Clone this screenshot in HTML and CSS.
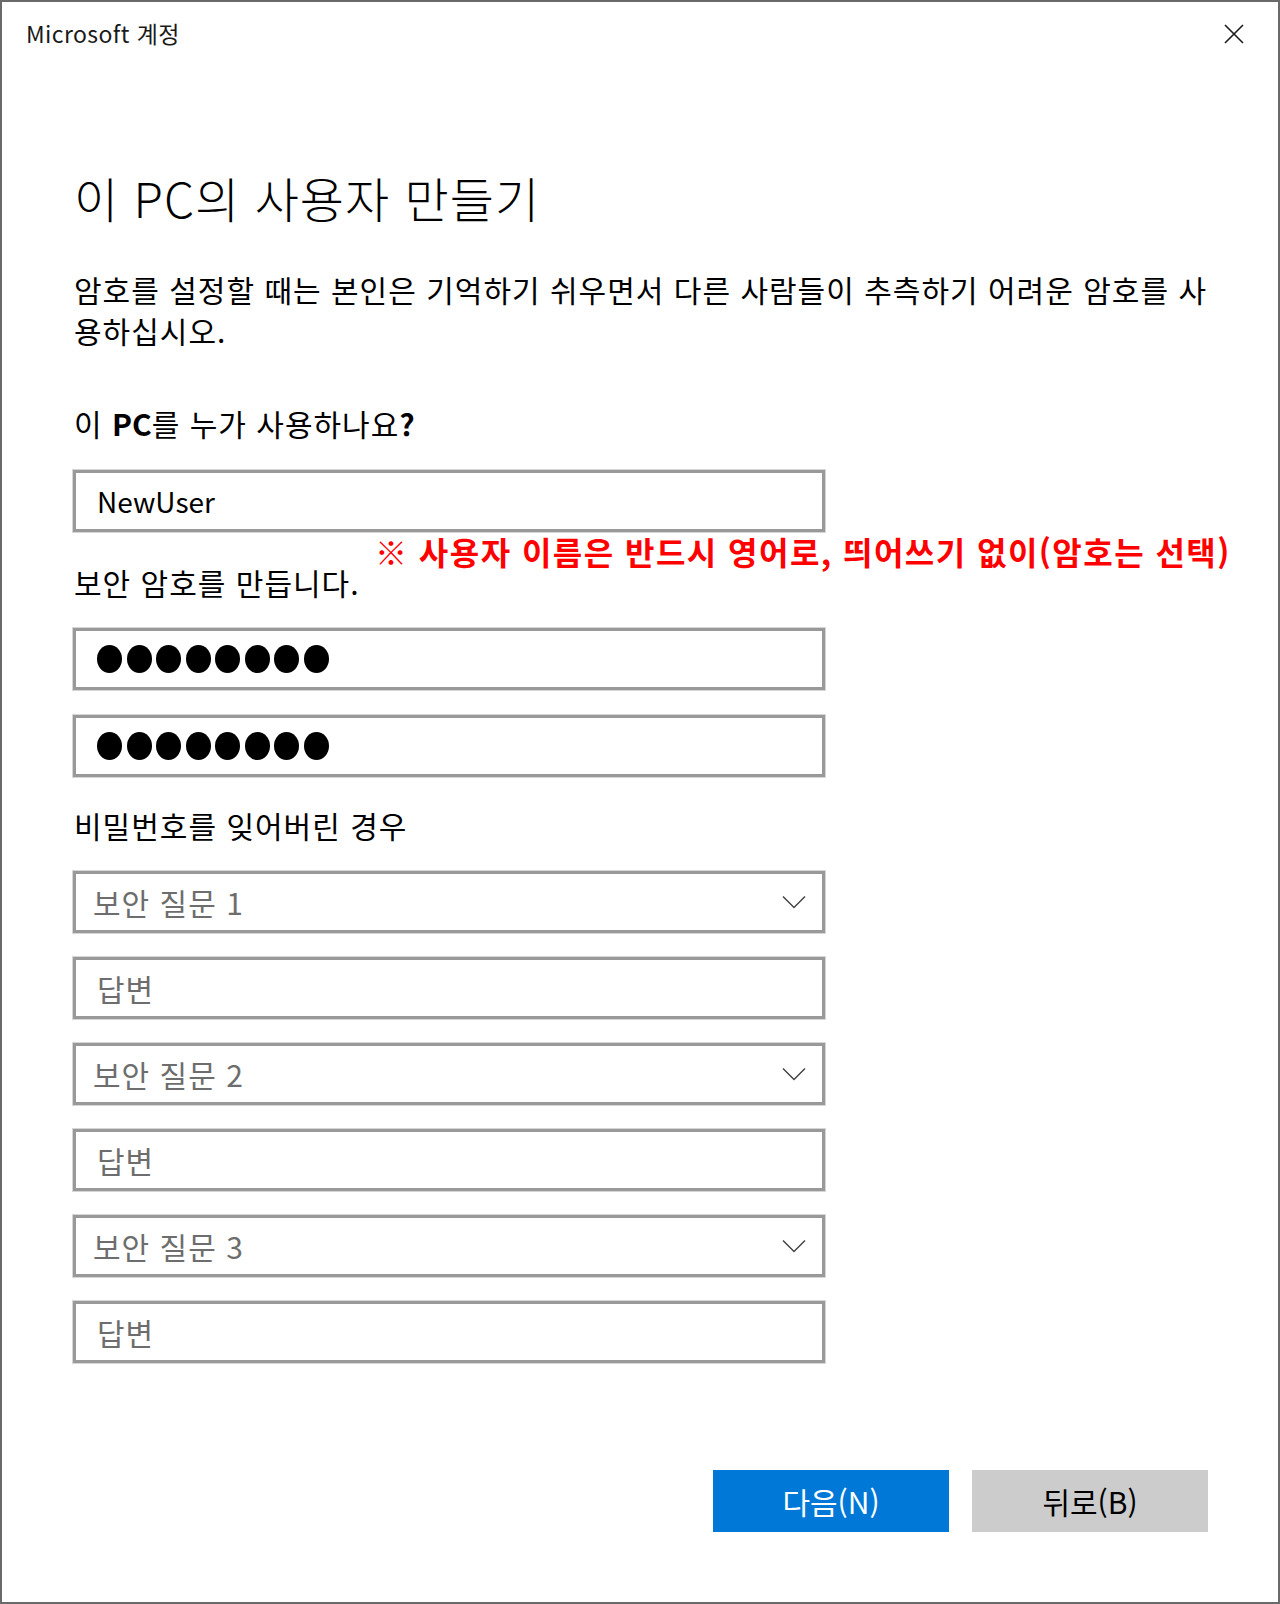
FILE: index.html
```html
<!DOCTYPE html>
<html lang="ko">
<head>
<meta charset="utf-8">
<title>Microsoft 계정</title>
<link rel="stylesheet" href="styles.css">
</head>
<body>
<div class="window">
  <header class="titlebar">
    <span class="title">Microsoft 계정</span>
    <span class="close" aria-label="닫기">
      <svg width="20" height="20" viewBox="0 0 20 20"><path d="M1 1 L19 19 M19 1 L1 19" stroke="#1a1a1a" stroke-width="1.6" fill="none"/></svg>
    </span>
  </header>
  <main class="content">
    <h1 class="heading">이 PC의 사용자 만들기</h1>
    <p class="intro">암호를 설정할 때는 본인은 기억하기 쉬우면서 다른 사람들이 추측하기 어려운 암호를 사<br>용하십시오.</p>

    <section class="group group-user">
      <div class="label">이 <b>PC</b>를 누가 사용하나요<b>?</b></div>
      <div class="field"><span class="value">NewUser</span></div>
      <div class="note">※ 사용자 이름은 반드시 영어로, 띄어쓰기 없이(암호는 선택)</div>
    </section>

    <section class="group group-pass">
      <div class="label">보안 암호를 만듭니다.</div>
      <div class="field"><span class="dots"><i></i><i></i><i></i><i></i><i></i><i></i><i></i><i></i></span></div>
      <div class="field"><span class="dots"><i></i><i></i><i></i><i></i><i></i><i></i><i></i><i></i></span></div>
    </section>

    <section class="group group-recovery">
      <div class="label">비밀번호를 잊어버린 경우</div>
      <div class="field select"><span class="placeholder q">보안 질문 1</span><svg class="chev" width="24" height="14" viewBox="0 0 24 14"><path d="M1 1.5 L12 12.5 L23 1.5" stroke="#444" stroke-width="1.5" fill="none"/></svg></div>
      <div class="field"><span class="placeholder">답변</span></div>
      <div class="field select"><span class="placeholder q">보안 질문 2</span><svg class="chev" width="24" height="14" viewBox="0 0 24 14"><path d="M1 1.5 L12 12.5 L23 1.5" stroke="#444" stroke-width="1.5" fill="none"/></svg></div>
      <div class="field"><span class="placeholder">답변</span></div>
      <div class="field select"><span class="placeholder q">보안 질문 3</span><svg class="chev" width="24" height="14" viewBox="0 0 24 14"><path d="M1 1.5 L12 12.5 L23 1.5" stroke="#444" stroke-width="1.5" fill="none"/></svg></div>
      <div class="field"><span class="placeholder">답변</span></div>
    </section>
  </main>
  <footer class="actions">
    <button class="btn btn-primary">다음(N)</button>
    <button class="btn btn-secondary">뒤로(B)</button>
  </footer>
</div>
</body>
</html>
```

FILE: styles.css
```css
* { box-sizing: border-box; }
html, body {
  margin: 0;
  padding: 0;
  background: #ffffff;
}
body {
  font-family: "Noto Sans CJK KR", "Noto Sans", sans-serif;
  color: #000;
}
.window {
  width: 1280px;
  height: 1604px;
  border: 2px solid #6a6a6a;
  display: flex;
  flex-direction: column;
  background: #fff;
}
.titlebar {
  height: 61px;
  display: flex;
  align-items: center;
  justify-content: space-between;
  padding: 0 34px 0 24px;
}
.title {
  font-size: 23px;
  letter-spacing: 0.4px;
  color: #1a1a1a;
}
.close {
  display: flex;
  width: 20px;
  height: 20px;
  margin-top: 2px;
}
.content {
  padding: 107px 70px 0 71px;
  display: flex;
  flex-direction: column;
}
.heading {
  margin: 0;
  font-size: 48px;
  font-weight: 300;
  letter-spacing: 1px;
  line-height: 55px;
  padding-left: 1px;
}
.intro {
  margin: 44px 0 0;
  font-size: 30px;
  letter-spacing: 1px;
  line-height: 41px;
  padding-left: 1px;
  white-space: nowrap;
}
.group {
  display: flex;
  flex-direction: column;
  gap: 24.5px;
  width: 752px;
}
.group-user {
  position: relative;
  margin-top: 52px;
}
.group-pass { margin-top: 30px; }
.group-recovery {
  margin-top: 28.5px;
  gap: 24px;
}
.label {
  font-size: 30px;
  letter-spacing: 1px;
  line-height: 41px;
  padding-left: 1px;
  margin-bottom: 1px;
}
.label b { font-weight: 700; letter-spacing: 0; }
.field {
  height: 62px;
  border: 3px solid #999;
  box-shadow: 0 0 0 1px #d6d6d6;
  display: flex;
  align-items: center;
  padding: 0 20px 0 21px;
  font-size: 28px;
}
.value { color: #000; }
.placeholder {
  color: #6d6d6d;
  font-size: 30px;
  letter-spacing: 1px;
}
.placeholder.q { margin-left: -4px; }
.select { justify-content: space-between; }
.chev { margin-right: -4px; }
.dots {
  display: flex;
  gap: 4.5px;
}
.dots i {
  display: block;
  width: 25px;
  height: 28px;
  border-radius: 50%;
  background: #000;
}
.note {
  position: absolute;
  left: 302px;
  top: 128px;
  white-space: nowrap;
  font-size: 32px;
  font-weight: 700;
  letter-spacing: 1.45px;
  color: #ff0000;
  line-height: 40px;
}
.actions {
  margin-top: auto;
  margin-bottom: 70px;
  display: flex;
  justify-content: flex-end;
  gap: 23px;
  padding-right: 70px;
}
.btn {
  width: 236px;
  height: 62px;
  border: none;
  font-family: inherit;
  font-size: 30px;
  padding: 0;
}
.btn-primary {
  background: #0078d7;
  color: #fff;
}
.btn-secondary {
  background: #cccccc;
  color: #000;
}
```
